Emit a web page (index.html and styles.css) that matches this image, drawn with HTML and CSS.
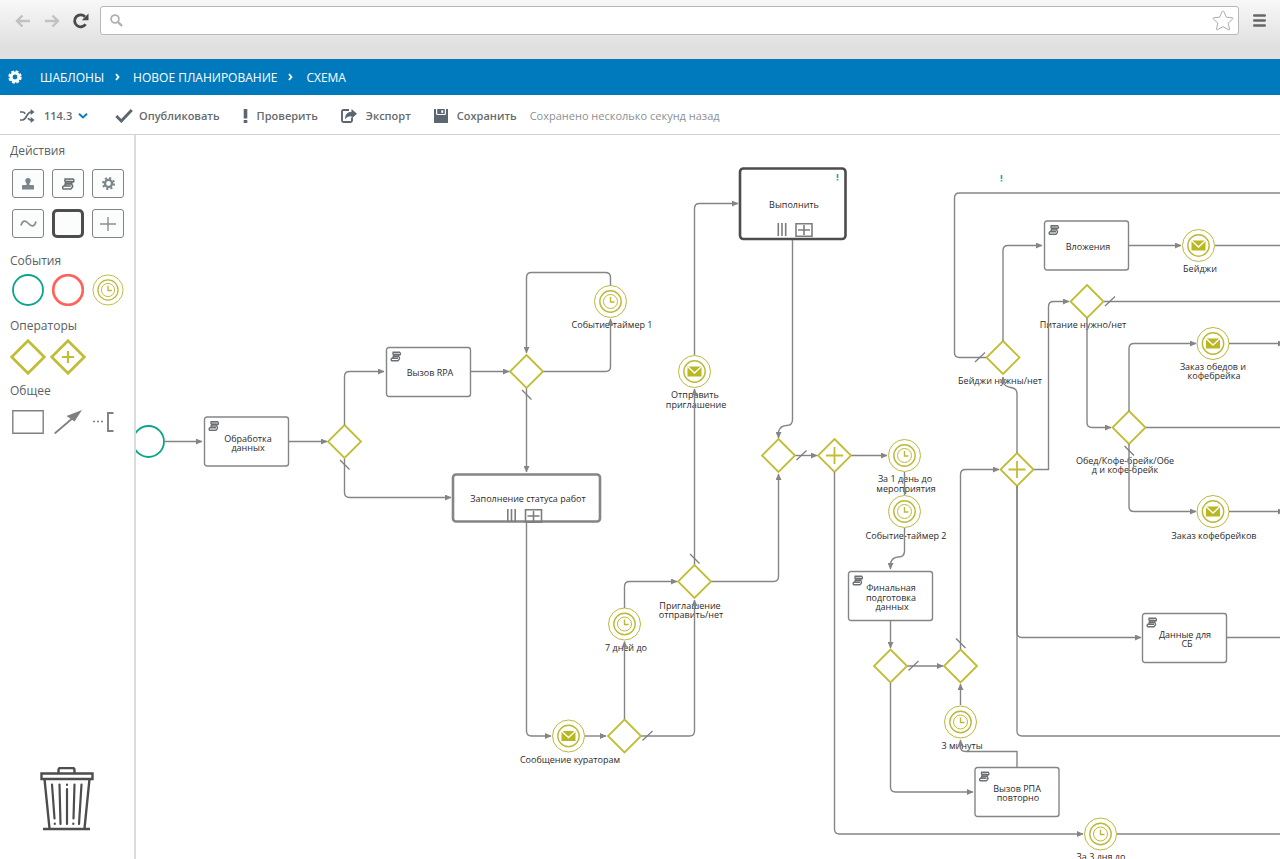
FILE: index.html
```html
<!DOCTYPE html>
<html lang="ru">
<head>
<meta charset="utf-8">
<title>Новое планирование — схема</title>
<meta name="viewport" content="width=device-width, initial-scale=1">
<link rel="stylesheet" href="styles.css">
</head>
<body>
<header class="browser">
  <button class="nav" type="button" aria-label="Назад"><svg width="16" height="14" viewBox="0 0 16 14"><path d="M15 7H2M7.500 1.500 2 7l5.500 5.500" fill="none" stroke="#bfc1c3" stroke-width="2.400"/></svg></button>
  <button class="nav" type="button" aria-label="Вперёд"><svg width="16" height="14" viewBox="0 0 16 14"><path d="M1 7h13M8.500 1.500 14 7l-5.500 5.500" fill="none" stroke="#bfc1c3" stroke-width="2.400"/></svg></button>
  <button class="nav" type="button" aria-label="Обновить"><svg width="16" height="16" viewBox="0 0 16 16"><path d="M12.600 11.200A6 6 0 1 1 12 3.700" fill="none" stroke="#4a4a4a" stroke-width="2.800"/><path d="M15.500.5v6.700H8.800z" fill="#4a4a4a"/></svg></button>
  <form class="address" role="search">
    <svg width="13" height="13" viewBox="0 0 13 13"><circle cx="5" cy="5" r="3.900" fill="none" stroke="#aeb0b2" stroke-width="1.800"/><path d="m8 8 4 4" stroke="#aeb0b2" stroke-width="2.400"/></svg>
    <input class="address-input" type="text" aria-label="Адрес">
    <button class="nav" type="button" aria-label="В закладки"><svg width="22" height="21" viewBox="0 0 22 21"><path d="M11 1q.6 0 .9.700l2.500 5.500 5.900.600q1.200.3.300 1.300l-4.400 4 1.300 5.900q.1 1.200-1.100.700L11 16.700l-5.400 3q-1.200.5-1.100-.7l1.300-5.900-4.400-4q-.9-1 .3-1.300l5.900-.600 2.500-5.500Q10.400 1 11 1z" fill="#fff" stroke="#a9abae" stroke-width="1"/></svg></button>
  </form>
  <button class="nav nav-menu" type="button" aria-label="Меню"><svg width="13" height="13" viewBox="0 0 13 13"><path d="M1.300 1.500h10.400M1.300 6.500h10.400M1.300 11.500h10.400" stroke="#666" stroke-width="2.600" stroke-linecap="round"/></svg></button>
</header>

<nav class="crumbs" aria-label="Путь">
  <svg class="crumbs-gear" width="14" height="14" viewBox="0 0 14 14"><circle cx="7" cy="7" r="3.900" fill="none" stroke="#fff" stroke-width="3"/><circle cx="7" cy="7" r="5.700" fill="none" stroke="#fff" stroke-width="2" stroke-dasharray="2.800 1.677"/></svg>
  <a href="#">ШАБЛОНЫ</a>
  <svg class="crumbs-sep" width="5" height="8" viewBox="0 0 5 8"><path d="m1 1 2.500 3L1 7" fill="none" stroke="#fff" stroke-width="1.800"/></svg>
  <a href="#">НОВОЕ ПЛАНИРОВАНИЕ</a>
  <svg class="crumbs-sep" width="5" height="8" viewBox="0 0 5 8"><path d="m1 1 2.500 3L1 7" fill="none" stroke="#fff" stroke-width="1.800"/></svg>
  <a href="#">СХЕМА</a>
</nav>

<div class="toolbar">
  <label class="tool tool-version">
    <svg width="16" height="14" viewBox="0 0 16 14"><g fill="none" stroke="#5b6670" stroke-width="1.700"><path d="M1 3h2.500c1.300 0 2 .7 2.700 1.800M9 9.300c.7 1 1.500 1.700 3 1.700h1M1 11h2.500c4.200 0 4-8 8.500-8h1"/></g><path d="M11.700 0 15.500 3l-3.800 3zM11.700 8l3.800 3-3.800 3z" fill="#5b6670"/></svg>
    <span class="version"><select class="version-select" aria-label="Версия"><option>114.3</option></select><svg width="10" height="6" viewBox="0 0 10 6"><path d="m1 .8 4 3.700L9 .8" fill="none" stroke="#0a7cba" stroke-width="1.900"/></svg></span>
  </label>
  <button class="tool tool-publish" type="button"><svg width="18" height="14" viewBox="0 0 18 14"><path d="m1.300 7 5 5L16.800 1" fill="none" stroke="#5b6670" stroke-width="2.900"/></svg>Опубликовать</button>
  <button class="tool" type="button"><svg width="5" height="14" viewBox="0 0 5 14"><path d="M.7 0h3.600v9.500H.7zM.7 11h3.600v3H.7z" fill="#5b6670"/></svg>Проверить</button>
  <button class="tool" type="button"><svg width="16" height="14" viewBox="0 0 16 14"><path d="M8 1H2.500Q1 1 1 2.500v9Q1 13 2.500 13h7q1.500 0 1.500-1.500V9" fill="none" stroke="#5b6670" stroke-width="1.900"/><path d="M16 4.800 10.500 0v2.800C6.500 3 4 5.500 4 10.500c1.500-2.300 3.500-3.300 6.500-3.200v2.500z" fill="#5b6670"/></svg>Экспорт</button>
  <button class="tool" type="button"><svg width="14" height="14" viewBox="0 0 14 14"><path d="M0 0h14v14H0z" fill="#5b6670"/><path d="M2.600 0v4.500q0 1 1 1h6.800q1 0 1-1V0" fill="none" stroke="#fff" stroke-width="1.200"/><path d="M7.300 1.300h1.900v2.600H7.300z" fill="#fff"/></svg>Сохранить</button>
  <span class="saved">Сохранено несколько секунд назад</span>
</div>

<div class="workspace">
  <aside class="palette">
    <h2 class="palette-title">Действия</h2>
    <div class="palette-grid palette-actions">
      <button class="action" type="button" aria-label="Задача пользователя"><svg width="12" height="12" viewBox="0 0 12 12"><path d="M6 0a2.700 2.700 0 0 1 2.700 2.700Q8.500 4.300 7.500 5.200V7H11q1 0 1 1v3.500H0V8q0-1 1-1h3.500V5.200q-1-.9-1.200-2.500A2.700 2.700 0 0 1 6 0z" fill="#7b858c"/></svg></button>
      <button class="action" type="button" aria-label="Сценарий"><svg width="13" height="12" viewBox="0 0 11 10"><use href="#script"/></svg></button>
      <button class="action" type="button" aria-label="Сервис"><svg width="13" height="13" viewBox="0 0 12 12"><circle cx="6" cy="6" r="3.300" fill="none" stroke="#7b858c" stroke-width="2.200"/><circle cx="6" cy="6" r="5" fill="none" stroke="#7b858c" stroke-width="2" stroke-dasharray="1.900 2.027"/></svg></button>
      <button class="action" type="button" aria-label="Сигнал"><svg width="17" height="9" viewBox="0 0 17 9"><path d="M1 6.500C2.500 1 5.500 1 8.500 4.500S14.500 8 16 2.500" fill="none" stroke="#8a8e91" stroke-width="1.700"/></svg></button>
      <button class="action action-bold" type="button" aria-label="Подпроцесс"></button>
      <button class="action" type="button" aria-label="Добавить"><svg width="16" height="14" viewBox="0 0 16 14"><path d="M8 0v14M0 7h16" stroke="#8a8e91" stroke-width="1.400"/></svg></button>
    </div>
    <h2 class="palette-title">События</h2>
    <div class="palette-grid">
      <button class="shape" type="button" aria-label="Начало"><svg width="32" height="32" viewBox="-16 -16 32 32"><circle r="15" fill="#fff" stroke="#0aa58d" stroke-width="1.800"/></svg></button>
      <button class="shape" type="button" aria-label="Конец"><svg width="32" height="32" viewBox="-16 -16 32 32"><circle r="14.800" fill="#fff" stroke="#ff6259" stroke-width="2.700"/></svg></button>
      <button class="shape" type="button" aria-label="Таймер"><svg width="32" height="32" viewBox="-17 -17 34 34"><use href="#timer"/></svg></button>
    </div>
    <h2 class="palette-title">Операторы</h2>
    <div class="palette-grid palette-gates">
      <button class="shape" type="button" aria-label="Исключающий шлюз"><svg width="36" height="36" viewBox="-18 -18 36 36"><path d="M0-16.300 16.300 0 0 16.300-16.300 0z" fill="#fff" stroke="#c1bd35" stroke-width="2.700"/></svg></button>
      <button class="shape" type="button" aria-label="Параллельный шлюз"><svg width="36" height="36" viewBox="-18 -18 36 36"><path d="M0-16.300 16.300 0 0 16.300-16.300 0z" fill="#fff" stroke="#c1bd35" stroke-width="2.700"/><path d="M0-6V6M-6 0H6" stroke="#c1bd35" stroke-width="2.200"/></svg></button>
    </div>
    <h2 class="palette-title">Общее</h2>
    <div class="palette-grid palette-common">
      <button class="shape" type="button" aria-label="Область"><svg width="32" height="24" viewBox="0 0 32 24"><path d="M.8.8h30.400v22.400H.8z" fill="#fff" stroke="#7e8082" stroke-width="1.400"/></svg></button>
      <button class="shape" type="button" aria-label="Поток"><svg width="28" height="24" viewBox="0 0 28 24"><path d="M.7 23.500 20 7" stroke="#7e8082" stroke-width="1.800"/><path d="M28 0 20.500 11.500 12.500 6z" fill="#7e8082"/></svg></button>
      <button class="shape shape-note" type="button" aria-label="Аннотация"><svg width="22" height="20" viewBox="0 0 22 20"><path d="M1 9.500h11" stroke="#7e8082" stroke-width="1.600" stroke-dasharray="2 2"/><path d="M21.500 1H16v18h5.500" fill="none" stroke="#7e8082" stroke-width="1.900"/></svg></button>
    </div>
    <button class="shape trash" type="button" aria-label="Удалить"><svg width="54" height="64" viewBox="0 0 54 64"><g fill="none" stroke="#4d4d4d" stroke-width="2.200"><path d="M18.500 6V3q0-2 2-2h12q2 0 2 2v3M1.500 6.500h51v5.500h-51zM4.500 12l5 49.500M49.500 12l-5 49.500M3 62h47" stroke-width="2.400"/><g stroke-linecap="round"><path d="m12 17.500 2.500 34M19.500 17.500l1 39.500M27 22v35M34.500 17.500l-1 34M41.500 17.500 39 57M14.800 56.500v.5M33.300 56.500v.5M27 17.500v.5"/></g></g></svg></button>
  </aside>

  <main class="canvas">
    <svg class="diagram" role="img" aria-label="Схема процесса">
      <defs>
        <marker id="arrow" markerUnits="userSpaceOnUse" markerWidth="7" markerHeight="6" refX="6" refY="3" orient="auto"><path d="M0 0 6.500 3 0 6z" fill="#858585"/></marker>
        <path id="gate" class="gate" d="M0-16.500 16.500 0 0 16.500-16.500 0z"/>
        <g id="plus"><path class="gate" d="M0-16.500 16.500 0 0 16.500-16.500 0z"/><path class="gate" d="M0-8.500V8.500M-8.500 0H8.500"/></g>
        <g id="timer" class="event"><circle r="16"/><circle class="event-inner" r="10.700"/><circle r="7"/><path class="event-hand" d="M0-4.500V.5H4"/></g>
        <g id="mail" class="event"><circle r="16"/><circle class="event-inner" r="10.700"/><path class="event-fill" d="M-7-5H7V5H-7z"/><path class="event-flap" d="M-7-5 0 1.500 7-5"/></g>
        <g id="script" stroke="#6c7073" stroke-width="1.400"><path d="M3.200 1H8.500L6.700 6.800H2.300L3.200 3.500z" fill="#c5c8ca" stroke="none"/><path fill="none" d="M2 .8h7.200q1.300.9.500 2.400H3Q1.800 2 3 .8M3.200 3 2.400 6.500M8.500 3.200q-.8 1.500.2 2.800T7.500 9.200H.8M1 6.700h6.500M1.200 6.700Q0 8 1 9.200M3 4.900h5.200"/></g>
        <g id="task"><rect class="task" x="0" y="0" width="84" height="49" rx="2.500"/><use href="#script" x="4" y="4"/></g>
        <g id="multi" class="multi"><path d="M.8 0v13M4.500 0v13M8.200 0v13"/><path d="M18.500.7h16v12.600h-16zM20.500 7h12M26.500 2v10"/></g>
        <path id="slash" class="slash" d="M-4.500-4.500 5 5"/>
        <path id="slash-up" class="slash" d="M-5 4.500 5-5"/>
      </defs>
      <g transform="translate(-136 -135)">
        <g class="nodes">
          <circle class="start" cx="148.500" cy="441.500" r="15.500"/>
          <use href="#task" x="204.500" y="417"/>
          <use href="#gate" x="344.500" y="441.500"/>
          <use href="#task" x="386.500" y="347.500"/>
          <use href="#gate" x="526.500" y="371.500"/>
          <use href="#timer" x="610.500" y="301.500"/>
          <rect class="sub" x="453" y="474.500" width="147" height="47" rx="3"/>
          <use href="#multi" x="507" y="509"/>
          <use href="#mail" x="694.500" y="371.500"/>
          <rect class="sub sub-dark" x="740" y="168.500" width="105.500" height="70.500" rx="3.500"/>
          <use href="#multi" x="777.500" y="223"/>
          <use href="#gate" x="778.500" y="455.500"/>
          <use href="#plus" x="834.500" y="455.500"/>
          <use href="#timer" x="904.500" y="455.500"/>
          <use href="#timer" x="904.500" y="511.500"/>
          <use href="#task" x="848.500" y="571.500"/>
          <use href="#gate" x="890.500" y="666"/>
          <use href="#gate" x="960.500" y="666"/>
          <use href="#timer" x="960.500" y="722"/>
          <use href="#task" x="975" y="767.500"/>
          <use href="#timer" x="1100.500" y="834"/>
          <use href="#gate" x="694.500" y="581.500"/>
          <use href="#timer" x="624.500" y="624"/>
          <use href="#mail" x="568.500" y="736"/>
          <use href="#gate" x="624.500" y="736"/>
          <use href="#gate" x="1003" y="357.500"/>
          <use href="#task" x="1044.500" y="221"/>
          <use href="#mail" x="1198.500" y="245.500"/>
          <use href="#gate" x="1087" y="301.500"/>
          <use href="#mail" x="1213" y="343.500"/>
          <use href="#gate" x="1129" y="427.500"/>
          <use href="#plus" x="1017" y="469.500"/>
          <use href="#mail" x="1213" y="511.500"/>
          <use href="#task" x="1142.500" y="613.500"/>
        </g>
        <g class="labels">
          <text x="248" y="442">Обработка<tspan x="248" y="451">данных</tspan></text>
          <text x="430" y="376">Вызов RPA</text>
          <text x="612" y="328">Событие-таймер 1</text>
          <text x="528" y="502">Заполнение статуса работ</text>
          <text x="695" y="398">Отправить<tspan x="696" y="408">приглашение</tspan></text>
          <text x="794" y="208">Выполнить</text>
          <text x="905" y="482">За 1 день до<tspan x="906" y="492">мероприятия</tspan></text>
          <text x="906" y="539">Событие-таймер 2</text>
          <text x="891" y="591">Финальная<tspan x="891" y="601">подготовка</tspan><tspan x="892" y="610">данных</tspan></text>
          <text x="962" y="749">3 минуты</text>
          <text x="1017" y="792">Вызов РПА<tspan x="1018" y="801">повторно</tspan></text>
          <text x="1101" y="860">За 3 дня до</text>
          <text x="690" y="609">Приглашение<tspan x="691" y="618">отправить/нет</tspan></text>
          <text x="626" y="651">7 дней до</text>
          <text x="570" y="763">Сообщение кураторам</text>
          <text x="1088" y="250">Вложения</text>
          <text x="1200" y="272">Бейджи</text>
          <text x="1083" y="328">Питание нужно/нет</text>
          <text x="1000" y="384">Бейджи нужны/нет</text>
          <text x="1213" y="370">Заказ обедов и<tspan x="1214" y="379">кофебрейка</tspan></text>
          <text x="1125" y="464">Обед/Кофе-брейк/Обе<tspan x="1125" y="473">д и кофе-брейк</tspan></text>
          <text x="1214" y="539">Заказ кофебрейков</text>
          <text x="1185" y="638">Данные для<tspan x="1187" y="647">СБ</tspan></text>
        </g>
        <path class="alert" d="M837.500 174v4M837.500 179v1.500M1001.500 175v4M1001.500 180v1.500"/>
        <g class="flows">
          <path d="M164.500 441.500H202"/>
          <path d="M289 441.500H327"/>
          <path d="M344.500 425V376.500q0-5 5-5H384"/>
          <path d="M344.500 459v33.500q0 5 5 5H451"/>
          <path d="M471 371.500H509"/>
          <path d="M543.500 371.500H605.500q5 0 5-5V319"/>
          <path d="M610.500 285.500V277.500q0-5-5-5H531.500q-5 0-5 5V353"/>
          <path d="M526.500 388.500V472"/>
          <path d="M526.500 522V731q0 5 5 5H551"/>
          <path d="M585 736H606"/>
          <path d="M624.500 719V641.500"/>
          <path d="M624.500 608V586.500q0-5 5-5H677"/>
          <path d="M641.500 736H689.500q5 0 5-5V600"/>
          <path d="M694.500 564.500V389"/>
          <path d="M694.500 355V208.500q0-5 5-5H738"/>
          <path d="M711.500 581.500H773.500q5 0 5-5V474"/>
          <path d="M792.500 240V419.500q0 6-6 6t-8 6V438"/>
          <path d="M795.500 455.500H817"/>
          <path d="M851.500 455.500H887"/>
          <path class="open" d="M904.500 472V495"/>
          <path d="M904.500 528V551q0 6-6 6t-8 6V569"/>
          <path d="M890.500 621V648"/>
          <path d="M907.500 666H943"/>
          <path d="M890.500 683V787q0 5 5 5H973"/>
          <path d="M1017 767V751.500H965.500q-5 0-5-5V740"/>
          <path d="M960.500 705V684"/>
          <path d="M960.500 649V474.500q0-5 5-5H999"/>
          <path d="M834.500 472V829q0 5 5 5H1083"/>
          <path class="open" d="M1117 834H4000"/>
          <path d="M1017 453V393.500q0-5-6-6t-8-5V377"/>
          <path class="open" d="M986 357.500H959.500q-5 0-5-5V198q0-5 5-5H4000"/>
          <path d="M1003 341V250.500q0-5 5-5H1042"/>
          <path d="M1129 245.500H1181"/>
          <path class="open" d="M1215 245.500H4000"/>
          <path d="M1034 469.500H1048.500V306.500q0-5 5-5H1069"/>
          <path class="open" d="M1104 301.500H4000"/>
          <path d="M1087 318V422.500q0 5 5 5H1111"/>
          <path d="M1129 411V348.500q0-5 5-5H1196"/>
          <path d="M1229 343.500H1284"/>
          <path class="open" d="M1146 427.500H4000"/>
          <path d="M1129 444V506.500q0 5 5 5H1196"/>
          <path d="M1229 511.500H1284"/>
          <path d="M1017 486V632.500q0 5 5 5H1141"/>
          <path class="open" d="M1227 637.500H4000"/>
          <path class="open" d="M1017 486V731q0 5 5 5H4000"/>
        </g>
        <g>
          <use href="#slash" x="344.500" y="464.500"/>
          <use href="#slash" x="526.500" y="394.500"/>
          <use href="#slash" x="694.500" y="558.500"/>
          <use href="#slash-up" x="647.500" y="736"/>
          <use href="#slash-up" x="801.500" y="455.500"/>
          <use href="#slash-up" x="913.500" y="666"/>
          <use href="#slash" x="960.500" y="643"/>
          <use href="#slash-up" x="980" y="357.500"/>
          <use href="#slash-up" x="1110" y="301.500"/>
          <use href="#slash" x="1129" y="450.500"/>
        </g>
      </g>
    </svg>
  </main>
</div>
</body>
</html>
```
FILE: styles.css
```css
* { box-sizing: border-box; }

body {
  margin: 0;
  height: 100vh;
  display: flex;
  flex-direction: column;
  background: #fff;
  font-family: "Open Sans", "Noto Sans", sans-serif;
  font-size: 12px;
  color: #5a5f63;
}

button, input, select { font: inherit; color: inherit; }
button { padding: 0; border: 0; background: none; cursor: pointer; }
svg { display: block; flex: none; }

.browser {
  flex: none;
  height: 59px;
  padding: 6px 14px 0 15px;
  display: flex;
  align-items: flex-start;
  gap: 13px;
  background: linear-gradient(#f8f8f8, #e0e0e0 46px);
}
.nav { height: 29px; display: flex; align-items: center; flex: none; }
.nav-menu { margin-left: 1px; }
.browser > .nav + .address { margin-left: -2px; }
.address {
  flex: 1;
  height: 29px;
  padding: 0 4px 0 9px;
  display: flex;
  align-items: center;
  gap: 8px;
  background: #fff;
  border: 1px solid #b8b8b8;
  border-radius: 3px;
}
.address-input { flex: 1; min-width: 0; border: 0; outline: 0; background: none; }

.crumbs {
  flex: none;
  height: 36px;
  padding: 0 8px;
  display: flex;
  align-items: center;
  gap: 11px;
  background: #007abd;
}
.crumbs a { color: #fff; text-decoration: none; }
.crumbs-gear { margin-right: 7px; }
.crumbs-sep { margin-right: 2px; }

.toolbar {
  flex: none;
  height: 40px;
  padding: 2px 19px 0;
  display: flex;
  align-items: center;
  gap: 23px;
  border-bottom: 1px solid #d2d2d2;
}
.tool {
  display: flex;
  align-items: center;
  gap: 9px;
  font-size: 11px;
  font-weight: 600;
  color: #666b6f;
  white-space: nowrap;
}
.tool-version { margin-right: 4px; }
.tool-publish { gap: 6px; }
.version { display: flex; align-items: center; gap: 5px; }
.version-select { appearance: none; border: 0; padding: 0; background: none; }
.saved { margin-left: -10px; font-size: 11px; color: #8c9094; white-space: nowrap; }

.workspace { flex: 1; min-height: 0; display: flex; }
.palette {
  flex: none;
  width: 136px;
  padding: 6px 10px 28px;
  display: flex;
  flex-direction: column;
  border-right: 2px solid #dcdcdc;
}
.palette-title { margin: 0; font-size: 12px; line-height: 20px; font-weight: 400; }
.palette-grid {
  display: grid;
  grid-template-columns: repeat(3, 32px);
  column-gap: 8px;
  padding: 3px 2px 10px;
}
.palette-actions { row-gap: 11px; padding: 8px 2px 13px; }
.palette-gates { padding: 5px 2px 8px; }
.palette-common { padding-top: 5px; }
.action {
  height: 29px;
  display: flex;
  align-items: center;
  justify-content: center;
  border: 1px solid #808284;
  border-radius: 3px;
  background: #fbfdfd;
}
.action-bold { border: 3px solid #4d4d4d; border-radius: 5px; }
.shape { width: 32px; height: 32px; display: flex; align-items: center; justify-content: center; }
.shape-note { justify-content: flex-start; }
.trash { width: auto; height: auto; margin: auto auto 0 30px; }

.canvas { flex: 1; min-width: 0; overflow: hidden; }
.diagram { width: 100%; height: 100%; }
.gate { fill: #fff; stroke: #c1bd35; stroke-width: 1.8px; }
.event { fill: #fff; stroke: #bcb937; stroke-width: 1px; }
.event-inner { stroke-width: 1.4px; }
.event-hand { fill: none; stroke-width: 1.4px; }
.event-fill { fill: #b9b822; stroke: none; }
.event-flap { fill: none; stroke: #fff; stroke-width: 1.3px; }
.start { fill: #fff; stroke: #0aa58d; stroke-width: 1.8px; }
.task { fill: #fff; stroke: #858585; stroke-width: 1.4px; }
.sub { fill: #fff; stroke: #858585; stroke-width: 2.6px; }
.sub-dark { stroke: #4d4d4d; }
.multi { fill: none; stroke: #7d7d7d; stroke-width: 1.6px; }
.slash { fill: none; stroke: #7d7d7d; stroke-width: 1.2px; }
.alert { stroke: #1ba9a4; stroke-width: 1.6px; }
.flows path { fill: none; stroke: #858585; stroke-width: 1.4px; marker-end: url(#arrow); }
.flows .open { marker-end: none; }
.labels { font-size: 9px; fill: #2b2b2b; text-anchor: middle; }
```
